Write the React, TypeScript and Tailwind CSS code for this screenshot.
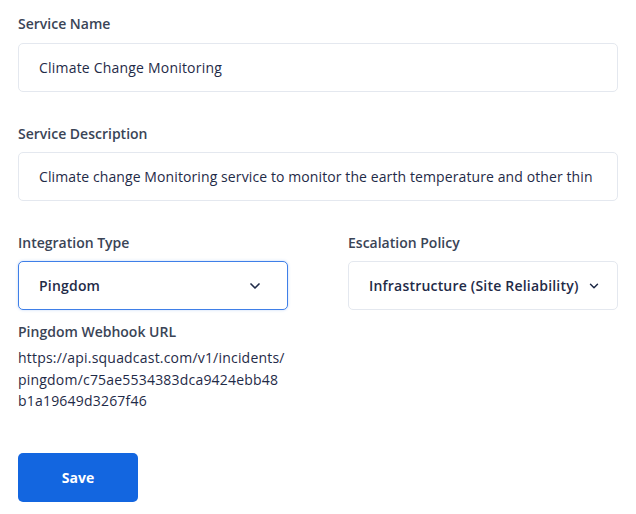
import { ChevronDown } from "lucide-react";

const font = { fontFamily: '"Open Sans", "Lato", sans-serif' };

function Label({ children }: { children: React.ReactNode }) {
  return <div className="text-[14px] leading-5 font-semibold text-[#3a4456]">{children}</div>;
}

function Field({ children, active }: { children: React.ReactNode; active?: boolean }) {
  return (
    <div
      className={
        "h-[49px] rounded-[5px] border bg-white flex items-center px-5 overflow-hidden whitespace-nowrap text-[14px] tracking-[0.2px] text-[#1f2b48] " +
        (active ? "border-[#3f7fe8] shadow-[0_0_3px_rgba(63,127,232,0.3)]" : "border-[#e4e8ef]")
      }
    >
      {children}
    </div>
  );
}

export default function App() {
  return (
    <div className="bg-white w-[636px] h-[514px] px-[18px] pt-[14px]" style={font}>
      <Label>Service Name</Label>
      <div className="mt-[9px]">
        <Field>Climate Change Monitoring</Field>
      </div>

      <div className="mt-8">
        <Label>Service Description</Label>
      </div>
      <div className="mt-2">
        <Field>
          <span className="block tracking-[0.1px]">
            Climate change Monitoring service to monitor the earth temperature and other thin
          </span>
        </Field>
      </div>

      <div className="mt-8 grid grid-cols-2 gap-[60px]">
        <div>
          <Label>Integration Type</Label>
          <div className="mt-2">
            <Field active>
              <div className="flex w-full items-center justify-between pr-1 font-semibold">
                <span>Pingdom</span>
                <ChevronDown size={16} strokeWidth={2.5} />
              </div>
            </Field>
          </div>
          <div className="mt-3">
            <Label>Pingdom Webhook URL</Label>
          </div>
          <div className="mt-[5px] text-[14px] tracking-[0.2px] leading-[21.5px] text-[#1f2b48] w-[290px] whitespace-nowrap">
            https://api.squadcast.com/v1/incidents/
            <br />
            pingdom/c75ae5534383dca9424ebb48
            <br />
            b1a19649d3267f46
          </div>
        </div>
        <div>
          <Label>Escalation Policy</Label>
          <div className="mt-2">
            <Field>
              <div className="flex items-center gap-2 font-semibold">
                <span>Infrastructure (Site Reliability)</span>
                <ChevronDown size={14} strokeWidth={2.5} />
              </div>
            </Field>
          </div>
        </div>
      </div>

      <button className="mt-[41px] w-[120px] h-[49px] rounded-[5px] bg-[#1366e0] text-white text-[14px] font-bold">
        Save
      </button>
    </div>
  );
}
